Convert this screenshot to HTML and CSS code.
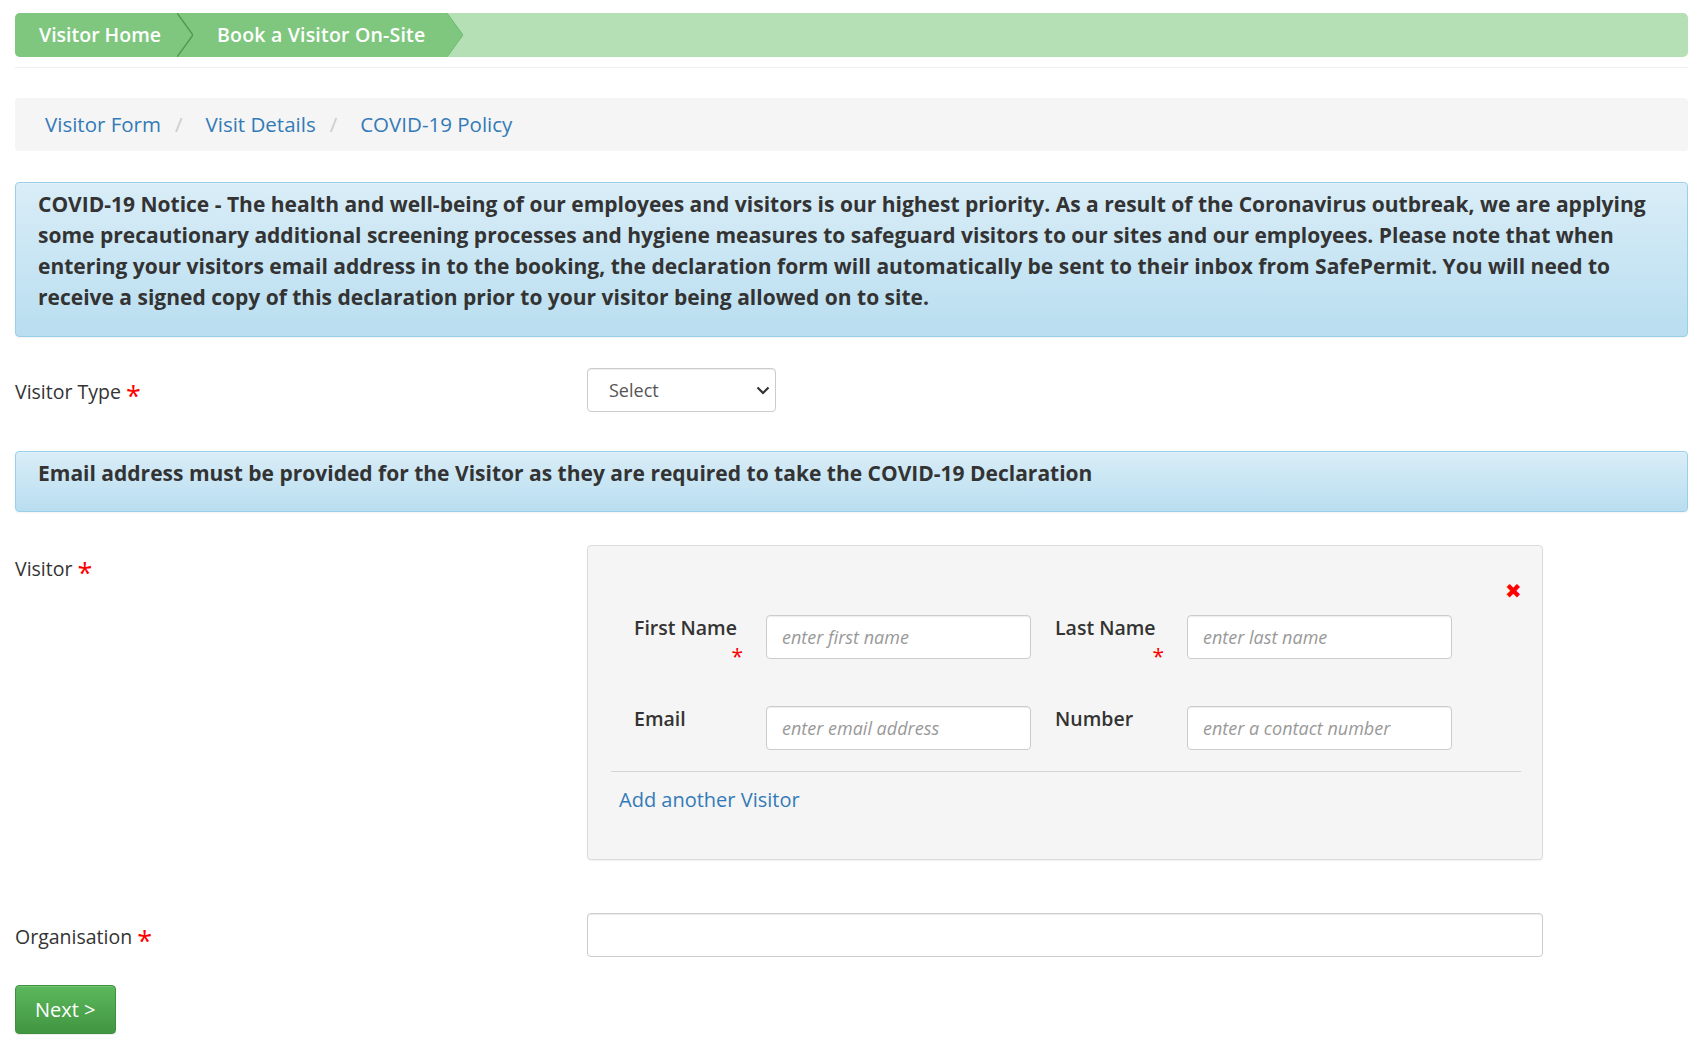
FILE: index.html
```html
<!DOCTYPE html>
<html lang="en">
<head>
    <meta charset="UTF-8">
    <meta name="viewport" content="width=device-width, initial-scale=1.0">
    <title>Book a Visitor On-Site</title>
    <link rel="stylesheet" href="styles.css">
</head>
<body>
    <div class="page">
        <nav class="steps">
            <a class="step step-first" href="#">Visitor Home</a>
            <svg class="step-sep" width="16" height="44" viewBox="0 0 16 44">
                <polyline points="0,0 16,22 0,44" fill="none" stroke="#4f9c4f" stroke-width="1.4"/>
            </svg>
            <a class="step step-current" href="#">Book a Visitor On-Site</a>
            <svg class="step-end" width="16" height="44" viewBox="0 0 16 44">
                <polygon points="0,0 16,22 0,44" fill="#7fc77f"/>
                <polyline points="0,0 16,22 0,44" fill="none" stroke="#6fbb6f" stroke-width="1"/>
            </svg>
        </nav>

        <hr class="rule">

        <ol class="crumbs">
            <li><a href="#">Visitor Form</a></li>
            <li><a href="#">Visit Details</a></li>
            <li><a href="#">COVID-19 Policy</a></li>
        </ol>

        <div class="alert alert-notice">
            COVID-19 Notice - The health and well-being of our employees and visitors is our highest priority. As a result of the Coronavirus outbreak, we are applying some precautionary additional screening processes and hygiene measures to safeguard visitors to our sites and our employees. Please note that when entering your visitors email address in to the booking, the declaration form will automatically be sent to their inbox from SafePermit. You will need to receive a signed copy of this declaration prior to your visitor being allowed on to site.
        </div>

        <form class="form" onsubmit="return false">
            <div class="form-row row-type">
                <label class="row-label">Visitor Type <span class="req">*</span></label>
                <div class="select-wrap">
                    <select class="select">
                        <option>Select</option>
                        <option>Contractor</option>
                        <option>Guest</option>
                    </select>
                    <svg class="select-caret" width="14" height="9" viewBox="0 0 14 9">
                        <polyline points="1.5,1.5 7,7 12.5,1.5" fill="none" stroke="#333" stroke-width="2.2"/>
                    </svg>
                </div>
            </div>

            <div class="alert alert-email">
                Email address must be provided for the Visitor as they are required to take the COVID-19 Declaration
            </div>

            <div class="form-row row-visitor">
                <label class="row-label">Visitor <span class="req">*</span></label>
                <div class="card">
                    <div class="card-head">
                        <span class="remove">&#10006;</span>
                    </div>
                    <div class="fields">
                        <label class="field-label">First Name <span class="req">*</span></label>
                        <input class="input input-cell" type="text" placeholder="enter first name">
                        <label class="field-label">Last Name <span class="req">*</span></label>
                        <input class="input input-cell" type="text" placeholder="enter last name">

                        <label class="field-label">Email</label>
                        <input class="input input-cell" type="text" placeholder="enter email address">
                        <label class="field-label">Number</label>
                        <input class="input input-cell" type="text" placeholder="enter a contact number">
                    </div>
                    <div class="card-foot">
                        <a href="#">Add another Visitor</a>
                    </div>
                </div>
            </div>

            <div class="form-row row-org">
                <label class="row-label">Organisation <span class="req">*</span></label>
                <input class="input input-wide" type="text">
            </div>

            <button type="submit" class="btn-next">Next &gt;</button>
        </form>
    </div>
</body>
</html>
```

FILE: styles.css
```css
body {
    margin: 0;
    font-family: 'Open Sans', 'Noto Sans', sans-serif;
    font-size: 20px;
    line-height: 31px;
    color: #333;
    background-color: #fff;
}

a {
    color: #337ab7;
    text-decoration: none;
}

.page {
    padding: 13px 11px 20px 15px;
}

/* top step bar */
.steps {
    display: flex;
    align-items: center;
    height: 44px;
    background-color: #b5dfb5;
    border-radius: 5px;
}

.step {
    display: block;
    height: 44px;
    line-height: 44px;
    padding: 0 16px 0 24px;
    color: #fff;
    font-weight: 600;
    font-size: 19.5px;
    background-color: #7fc77f;
}

.step-first {
    border-radius: 5px 0 0 5px;
}

.step-current {
    padding-right: 22px;
    letter-spacing: 0.2px;
}

.step-sep {
    display: block;
    background-color: #7fc77f;
}

.step-end {
    display: block;
}

.rule {
    margin: 10px 0 30px;
    border: 0;
    border-top: 1px solid #eee;
}

/* breadcrumb */
.crumbs {
    list-style: none;
    display: flex;
    margin: 0 0 31px;
    padding: 11px 30px;
    font-size: 20.5px;
    background-color: #f5f5f5;
    border-radius: 4px;
}

.crumbs li + li::before {
    content: "/";
    color: #ccc;
    margin: 0 23px 0 14px;
}

/* info alerts */
.alert {
    font-weight: 700;
    font-size: 21px;
    color: #333;
    background-image: linear-gradient(to bottom, #d9edf7 0, #b9def0 100%);
    border: 1px solid #9acfea;
    border-radius: 4px;
    box-shadow: inset 0 1px 0 rgba(255, 255, 255, 0.25), 0 1px 2px rgba(0, 0, 0, 0.05);
}

.alert-notice {
    padding: 6px 22px 23px;
    margin-bottom: 31px;
}

.alert-email {
    padding: 6px 22px 22px;
    margin-bottom: 33px;
}

/* form rows */
.form-row {
    display: grid;
    grid-template-columns: 572px 956px;
    align-items: start;
}

.row-label {
    padding-top: 8px;
    font-size: 19.5px;
}

.req {
    color: #f00;
}

.row-label .req {
    font-size: 27px;
    line-height: 0;
    vertical-align: -7px;
}

.row-type {
    margin-bottom: 39px;
}

.row-visitor {
    margin-bottom: 53px;
}

.row-org {
    margin-bottom: 28px;
}

.select-wrap {
    position: relative;
    width: 189px;
}

.select {
    display: block;
    width: 189px;
    height: 44px;
    padding: 0 30px 0 21px;
    font-family: inherit;
    font-size: 18px;
    color: #555;
    background-color: #fff;
    border: 1px solid #ccc;
    border-radius: 4px;
    box-shadow: inset 0 1px 1px rgba(0, 0, 0, 0.075);
    appearance: none;
    -webkit-appearance: none;
}

.select-caret {
    position: absolute;
    top: 18px;
    right: 6px;
    pointer-events: none;
}

.input {
    display: block;
    box-sizing: border-box;
    width: 100%;
    height: 44px;
    padding: 0 15px;
    font-family: inherit;
    font-size: 18px;
    color: #555;
    background-color: #fff;
    border: 1px solid #ccc;
    border-radius: 4px;
    box-shadow: inset 0 1px 1px rgba(0, 0, 0, 0.075);
}

.input::placeholder {
    color: #999;
    font-style: italic;
}

/* visitor card */
.card {
    padding: 0 21px 0 23px;
    background-color: #f5f5f5;
    border: 1px solid #dcdcdc;
    border-radius: 4px;
    box-shadow: 0 1px 2px rgba(0, 0, 0, 0.06);
}

.card-head {
    display: flex;
    justify-content: flex-end;
    padding-top: 35px;
    height: 20px;
    line-height: 20px;
    margin-bottom: 14px;
}

.remove {
    color: #f00;
    font-size: 20px;
    width: 16px;
    text-align: center;
}

.fields {
    display: grid;
    grid-template-columns: 132px 289px 132px 265px;
    row-gap: 37px;
    padding-left: 23px;
    padding-bottom: 21px;
    border-bottom: 1px solid #d4d4d4;
}

.field-label {
    display: flex;
    flex-direction: column;
    width: 111px;
    font-size: 19.5px;
    font-weight: 600;
    line-height: 26px;
}

.field-label .req {
    align-self: flex-end;
    margin-top: 2px;
    margin-right: 2px;
    font-size: 21px;
    font-weight: 400;
}

.input-cell {
    width: 265px;
}

.card-foot {
    padding: 12px 8px 44px;
}

.input-wide {
    width: 956px;
}

/* next button */
.btn-next {
    display: block;
    height: 49px;
    padding: 0 19px;
    font-family: inherit;
    font-size: 20px;
    color: #fff;
    background-image: linear-gradient(to bottom, #5cb85c 0, #419641 100%);
    border: 1px solid #3e8f3e;
    border-radius: 4px;
    box-shadow: inset 0 1px 0 rgba(255, 255, 255, 0.15), 0 1px 1px rgba(0, 0, 0, 0.075);
    cursor: pointer;
}
```
